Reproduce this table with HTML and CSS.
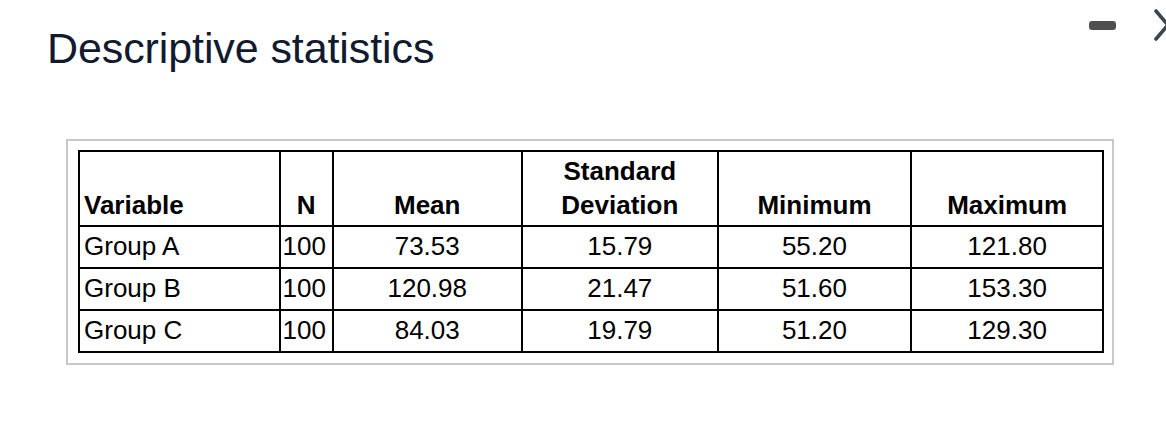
FILE: index.html
```html
<!DOCTYPE html>
<html>
<head>
<meta charset="utf-8">
<link rel="stylesheet" href="styles.css">
</head>
<body>
<header class="top">
  <h1 class="title">Descriptive statistics</h1>
  <div class="controls">
    <span class="minus"></span>
    <svg class="chev" width="14" height="34" viewBox="0 0 14 34"><path d="M2 3 L14 17 L2 31" fill="none" stroke="#3d4551" stroke-width="3.6" stroke-linecap="round" stroke-linejoin="round"/></svg>
  </div>
</header>
<div class="box">
  <table class="stats">
    <thead>
      <tr>
        <th class="c-var left">Variable</th>
        <th class="c-n">N</th>
        <th class="c-mean">Mean</th>
        <th class="c-sd">Standard<br>Deviation</th>
        <th class="c-min">Minimum</th>
        <th class="c-max">Maximum</th>
      </tr>
    </thead>
    <tbody>
      <tr><td class="left">Group A</td><td class="n">100</td><td>73.53</td><td>15.79</td><td>55.20</td><td>121.80</td></tr>
      <tr><td class="left">Group B</td><td class="n">100</td><td>120.98</td><td>21.47</td><td>51.60</td><td>153.30</td></tr>
      <tr><td class="left">Group C</td><td class="n">100</td><td>84.03</td><td>19.79</td><td>51.20</td><td>129.30</td></tr>
    </tbody>
  </table>
</div>
</body>
</html>
```
FILE: styles.css
```css
html, body {
  margin: 0;
  padding: 0;
  background: #ffffff;
}
body {
  width: 1166px;
  height: 436px;
  overflow: hidden;
  font-family: "Liberation Sans", Arial, sans-serif;
}
.top {
  display: flex;
  align-items: flex-start;
  padding-left: 47px;
}
.title {
  margin: 25px 0 0 0;
  font-size: 43px;
  font-weight: normal;
  line-height: 47px;
  color: #111a2e;
  letter-spacing: -0.1px;
}
.controls {
  margin-left: auto;
  display: flex;
  align-items: center;
  gap: 38px;
  padding-top: 8px;
  margin-right: -2px;
}
.minus {
  display: block;
  width: 27px;
  height: 9px;
  border-radius: 3px;
  background: #4f4f4f;
}
.chev {
  display: block;
}
.box {
  margin: 67px 0 0 66px;
  width: 1026px;
  border: 2px solid #c8c8c8;
  padding: 9px 8px 10px 10px;
}
.stats {
  width: 1026px;
  border-collapse: collapse;
  border: 2px solid #000;
  font-size: 26px;
  color: #000;
}
.stats th, .stats td {
  border: 2px solid #000;
  padding: 5px 4px 6px 4px;
  text-align: center;
  line-height: 29px;
}
.stats th {
  font-weight: bold;
  vertical-align: bottom;
  padding-top: 2px;
  padding-bottom: 3px;
  line-height: 34px;
}
.stats td {
  height: 29px;
}
.stats .left {
  text-align: left;
}
.stats td.n {
  padding: 5px 2px 6px 2px;
  text-align: left;
}
.c-var { width: 191px; }
.c-n { width: 43px; }
.c-mean { width: 180px; }
.c-sd { width: 186px; }
.c-min { width: 184px; }
.c-max { width: 182px; }
```
